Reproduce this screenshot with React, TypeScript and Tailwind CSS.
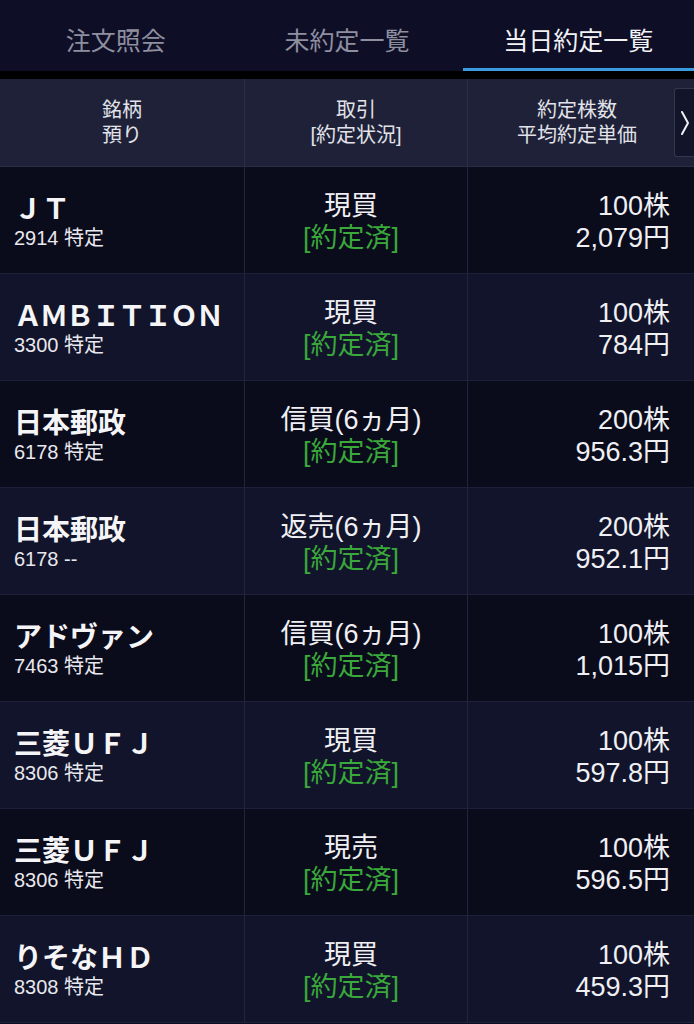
import React from "react";

const rows = [
  { name: "ＪＴ", code: "2914 特定", trade: "現買", qty: "100株", price: "2,079円" },
  { name: "ＡＭＢＩＴＩＯＮ", code: "3300 特定", trade: "現買", qty: "100株", price: "784円", tight: true },
  { name: "日本郵政", code: "6178 特定", trade: "信買(6ヵ月)", qty: "200株", price: "956.3円" },
  { name: "日本郵政", code: "6178 --", trade: "返売(6ヵ月)", qty: "200株", price: "952.1円" },
  { name: "アドヴァン", code: "7463 特定", trade: "信買(6ヵ月)", qty: "100株", price: "1,015円" },
  { name: "三菱ＵＦＪ", code: "8306 特定", trade: "現買", qty: "100株", price: "597.8円" },
  { name: "三菱ＵＦＪ", code: "8306 特定", trade: "現売", qty: "100株", price: "596.5円" },
  { name: "りそなＨＤ", code: "8308 特定", trade: "現買", qty: "100株", price: "459.3円" },
];

const font = { fontFamily: '"Liberation Sans", "Noto Sans CJK JP", sans-serif' };

export default function App() {
  return (
    <div className="w-[694px] h-[1024px] overflow-hidden bg-[#0c0d20] text-white" style={font}>
      {/* Tabs */}
      <div className="flex h-[71px] bg-[#0e0e27]">
        <div className="flex-1 flex items-center justify-center pt-[16px] pb-[3px] text-[25px] text-[#8e8f9f]">注文照会</div>
        <div className="flex-1 flex items-center justify-center pt-[16px] pb-[3px] text-[25px] text-[#8e8f9f]">未約定一覧</div>
        <div className="flex-1 flex flex-col">
          <div className="flex-1 flex items-center justify-center pt-[16px] text-[25px] text-[#f2f2f5]">当日約定一覧</div>
          <div className="h-[3px] bg-[#3c9ae0]" />
        </div>
      </div>
      <div className="h-[8px] bg-black" />
      {/* Header */}
      <div className="relative grid grid-cols-[245px_223px_1fr] h-[88px] bg-[#1e2137] border-b border-[#2a2d45] text-[20px] leading-[25px] text-[#e2e3ea]">
        <div className="flex flex-col items-center justify-center border-r border-[#2b2e47]">
          <span>銘柄</span>
          <span>預り</span>
        </div>
        <div className="flex flex-col items-center justify-center border-r border-[#2b2e47]">
          <span>取引</span>
          <span>[約定状況]</span>
        </div>
        <div className="flex flex-col items-center justify-center pr-[8px]">
          <span>約定株数</span>
          <span>平均約定単価</span>
        </div>
        <div className="absolute right-0 top-[9px] w-[20px] h-[69px] bg-[#12142a] border border-r-0 border-[#34374f] rounded-l-[3px] flex items-center justify-center">
          <svg width="10" height="26" viewBox="0 0 10 26" fill="none">
            <path d="M2 2 L8 13 L2 24" stroke="#f0f0f4" strokeWidth="2" strokeLinecap="round" strokeLinejoin="round" />
          </svg>
        </div>
      </div>
      {/* Rows */}
      {rows.map((r, i) => (
        <div
          key={i}
          className={`grid grid-cols-[245px_223px_1fr] h-[107px] border-b border-[#1d2038] ${i % 2 === 0 ? "bg-[#0a0b1b]" : "bg-[#11142a]"}`}
        >
          <div className="flex flex-col justify-center pl-[14px] pt-[3px] border-r border-[#22253d]">
            <span className={`text-[28px] font-bold leading-[33px] text-[#f5f5f7] ${r.tight ? "tracking-[-2px]" : ""}`}>{r.name}</span>
            <span className="text-[20px] leading-[24px] text-[#e8e8ee]">{r.code}</span>
          </div>
          <div className="flex flex-col items-center justify-center pr-[10px] pt-[3px] border-r border-[#22253d] text-[27px] leading-[32px]">
            <span className="text-[#f0f0f4]">{r.trade}</span>
            <span className="text-[#3aa83a]">[約定済]</span>
          </div>
          <div className="flex flex-col items-end justify-center pr-[24px] pt-[3px] text-[27px] leading-[32px] text-[#f0f0f4]">
            <span>{r.qty}</span>
            <span>{r.price}</span>
          </div>
        </div>
      ))}
    </div>
  );
}
